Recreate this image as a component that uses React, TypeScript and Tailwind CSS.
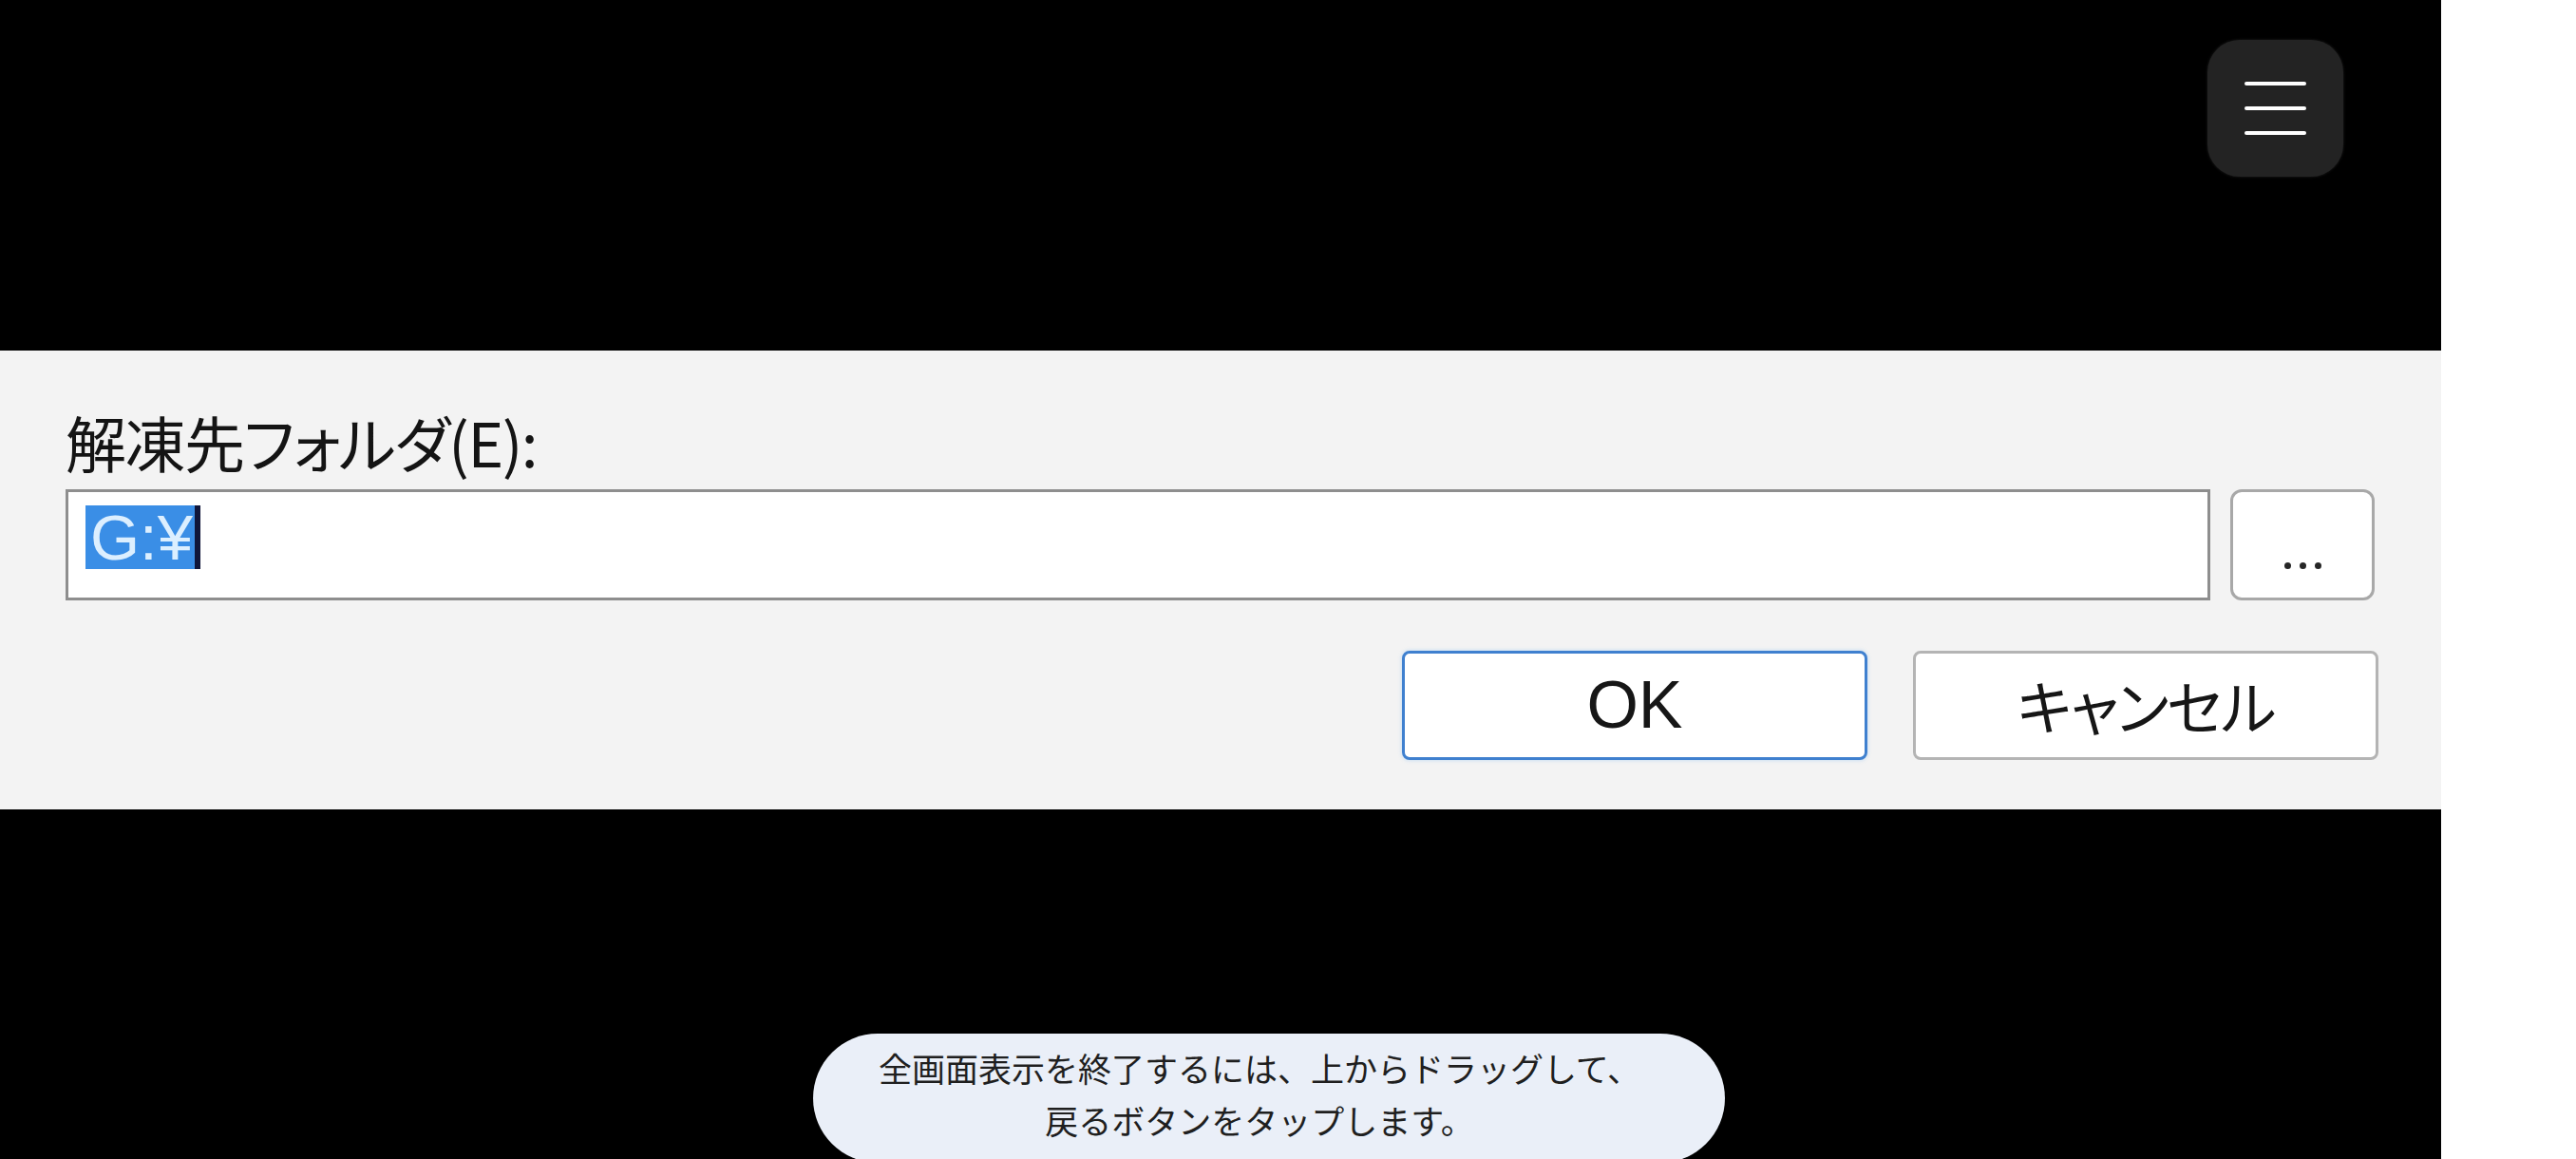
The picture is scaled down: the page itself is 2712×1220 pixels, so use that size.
import React from "react";

const jp = "font-['Noto_Sans_CJK_JP','Noto_Sans',sans-serif]";
const win = "font-['Liberation_Sans','Noto_Sans_CJK_JP',sans-serif]";

const MenuButton = () => (
  <button className="flex h-[144px] w-[143px] flex-col items-center justify-center gap-[22px] rounded-[34px] bg-[#232323] shadow-[0_0_3px_rgba(255,255,255,0.12)]">
    <span className="h-[4px] w-[65px] rounded-full bg-white" />
    <span className="h-[4px] w-[65px] rounded-full bg-white" />
    <span className="h-[4px] w-[65px] rounded-full bg-white" />
  </button>
);

const DialogButton = ({ label, primary }: { label: string; primary?: boolean }) => (
  <button
    className={
      "flex h-[115px] w-[490px] items-center justify-center rounded-[8px] bg-white text-[#161616] " +
      (primary
        ? "border-[3px] border-[#3f80cf] shadow-[0_0_4px_rgba(80,160,240,0.35)]"
        : "border-[3px] border-[#b4b4b4]")
    }
  >
    {label}
  </button>
);

export default function App() {
  return (
    <div className="flex h-[1220px] w-[2712px] overflow-hidden bg-white">
      <div className="relative flex w-[2570px] flex-col bg-black">
        {/* top bar with the menu button */}
        <div className="flex h-[369px] justify-end pr-[103px] pt-[42px]">
          <MenuButton />
        </div>

        {/* extract dialog strip */}
        <div className="flex h-[483px] flex-col bg-[#f3f3f3] pl-[69px]">
          <div
            className={`${jp} mt-[63px] h-[64px] text-[64px] leading-none text-[#141414] [font-feature-settings:'palt'] tracking-[-1.5px]`}
          >
            解凍先フォルダ(E):
          </div>

          <div className="mt-[19px] flex gap-[21px] pr-[70px]">
            <div className="flex h-[117px] flex-1 items-start border-[3px] border-[#8e8e8e] bg-white pl-[18px] pt-[14px]">
              <span
                className={`${win} flex h-[67px] items-center border-r-[6px] border-[#10163a] bg-[#3a8ee6] pl-[5px] pr-[2px] text-[67px] leading-none text-[#dcefff]`}
              >
                G:¥
              </span>
            </div>
            <button className="flex h-[117px] w-[152px] items-center justify-center gap-[9px] rounded-[12px] border-[3px] border-[#a8a8a8] bg-white pt-[44px]">
              <span className="h-[7px] w-[7px] rounded-full bg-[#262626]" />
              <span className="h-[7px] w-[7px] rounded-full bg-[#262626]" />
              <span className="h-[7px] w-[7px] rounded-full bg-[#262626]" />
            </button>
          </div>

          <div className={`${win} mt-[53px] flex justify-end gap-[48px] pr-[66px] text-[70px]`}>
            <DialogButton label="OK" primary />
            <span className={`${jp} contents [font-feature-settings:'palt'] text-[62px] tracking-[-2px]`}>
              <DialogButton label="キャンセル" />
            </span>
          </div>
        </div>

        <div className="flex-1" />

        {/* system toast */}
        <div
          className={`${jp} absolute left-[856px] top-[1088px] flex h-[136px] w-[960px] flex-col items-center rounded-full bg-[#eaeff8] pr-[20px] pt-[8px] text-[35px] leading-[55px] text-[#1f1f1f]`}
        >
          <span>全画面表示を終了するには、上からドラッグして、</span>
          <span>戻るボタンをタップします。</span>
        </div>
      </div>
    </div>
  );
}
